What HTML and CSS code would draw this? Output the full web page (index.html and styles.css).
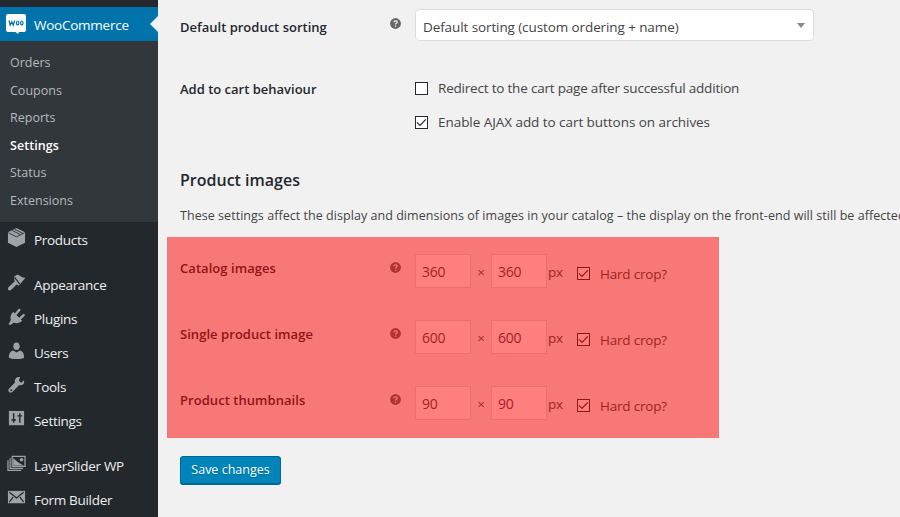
FILE: index.html
```html
<!DOCTYPE html>
<html lang="en">
<head>
<meta charset="utf-8">
<title>WooCommerce settings</title>
<link rel="stylesheet" href="styles.css">
</head>
<body>
<svg class="defs" width="0" height="0">
  <symbol id="help" viewBox="0 0 11 11"><circle cx="5.5" cy="5.5" r="5.4" fill="#666"/><path d="M3.9 4.3C3.9 2.3 7.2 2.3 7.2 4.2C7.2 5.3 5.6 5.3 5.6 6.6M5.6 7.5V8.8" fill="none" stroke="#f1f1f1" stroke-width="1.3"/></symbol>
  <symbol id="check" viewBox="0 0 11 11"><path d="M1 5.300L4 8.300L9.800 2.300" fill="none" stroke="#23282d" stroke-width="1.2"/></symbol>
</svg>
<div class="screen">
  <nav class="sidebar">
    <a class="item current"><svg class="icon" viewBox="0 0 20 20"><path d="M2 0h16a2 2 0 0 1 2 2v14a2 2 0 0 1-2 2h-5l-1 2-2.500-2H2a2 2 0 0 1-2-2V2a2 2 0 0 1 2-2z" fill="#fff"/><path d="M3 6.500l1.200 4.800 1.600-3.500 1.500 3.500 1.500-4.800" fill="none" stroke="#0073aa" stroke-width="1.200"/><ellipse cx="11.700" cy="8.900" rx="1.200" ry="1.900" fill="none" stroke="#0073aa" stroke-width="1.200"/><ellipse cx="15.800" cy="8.900" rx="1.200" ry="1.900" fill="none" stroke="#0073aa" stroke-width="1.200"/></svg><span>WooCommerce</span></a>
    <div class="submenu">
      <a>Orders</a><a>Coupons</a><a>Reports</a><a class="active">Settings</a><a>Status</a><a>Extensions</a>
    </div>
    <a class="item products"><svg class="icon" viewBox="0 0 20 20"><path d="M10 0l9 4.500v11L10 20l-9-4.500v-11z" fill="#9ea3a8"/><path d="M1.500 5L10 9.300L18.500 5M5.500 2.600l8.500 4.300M8 1.300l8.500 4.300" fill="none" stroke="#23282d" stroke-width=".9"/></svg><span>Products</span></a>
    <a class="item gap"><svg class="icon" viewBox="0 0 20 20"><path d="M7.500 3L10.500.8c2.500-.8 3.500 2.700 9 3.200L12.500 12l-2.500-1-5.500 5.500c-2 2-4.500 0-3-2.500L8 8z" fill="#9ea3a8"/><path d="M8 3.600l5.500 7" stroke="#23282d" stroke-width="1.200"/></svg><span>Appearance</span></a>
    <a class="item"><svg class="icon" viewBox="0 0 20 20"><path d="M6.500 4l9.500 9.500c-2.500 2.500-6 3-9 2L3.500 18l-2-1L4 13C3 10 4 6.500 6.500 4z" fill="#9ea3a8"/><path d="M9.500 6L13 2M14 11L17.500 7.500" stroke="#9ea3a8" stroke-width="2.500" stroke-linecap="round"/></svg><span>Plugins</span></a>
    <a class="item"><svg class="icon" viewBox="0 0 20 20"><ellipse cx="10" cy="4.500" rx="3.300" ry="4" fill="#9ea3a8"/><path d="M2 16.500c0-5 2-7 4.500-7.500l3.500 2 3.500-2c2.500.5 4.500 2.500 4.500 7.500-2 1.800-14 1.800-16 0z" fill="#9ea3a8"/></svg><span>Users</span></a>
    <a class="item"><svg class="icon" viewBox="0 0 20 20"><path d="M17.800 4.500L15 7l-2.500-2 1.200-3.800C10 .2 7.500 3.500 8.400 6.800L2 13.500c-2 2.500 1.500 5.500 4 3.200l6.500-7C16 10.500 19 8 17.800 4.500z" fill="#9ea3a8"/><circle cx="4.500" cy="15" r="1" fill="#23282d"/></svg><span>Tools</span></a>
    <a class="item"><svg class="icon" viewBox="0 0 20 20"><path d="M2 1h16v15H2z" fill="#9ea3a8"/><path d="M7 3.500v10M13.500 3.500v10M4.500 10.500h5M11 6.200h5" stroke="#23282d" stroke-width="1.500"/></svg><span>Settings</span></a>
    <a class="item gap"><svg class="icon" viewBox="0 0 20 20"><path d="M5.500 1.500h13.500v10.500H5.500zM3.300 3.500v10.700H17M1 5.500v10.800H15" fill="none" stroke="#9ea3a8" stroke-width="1.300"/><path d="M6.500 3.500l5.500 4.500 5.500 3H6.500z" fill="#9ea3a8"/><circle cx="15.300" cy="5" r="1.900" fill="#9ea3a8"/></svg><span>LayerSlider WP</span></a>
    <a class="item"><svg class="icon" viewBox="0 0 20 20"><path d="M1 2h18v13H1z" fill="#9ea3a8"/><path d="M2.500 3.500l7.500 6 7.500-6M2.500 13.500l4-5M17.500 13.500l-4-5" fill="none" stroke="#23282d" stroke-width="1.300"/></svg><span>Form Builder</span></a>
  </nav>
  <main class="content">
    <div class="row sorting">
      <strong>Default product sorting</strong><svg class="help"><use href="#help"/></svg>
      <div class="select"><span>Default sorting (custom ordering + name)</span><i class="caret"></i></div>
    </div>
    <div class="row cart">
      <strong>Add to cart behaviour</strong><span></span>
      <div class="checks">
        <label><svg class="box"></svg><span class="redirect">Redirect to the cart page after successful addition</span></label>
        <label><svg class="box"><use href="#check"/></svg><span class="ajax">Enable AJAX add to cart buttons on archives</span></label>
      </div>
    </div>
    <h2>Product images</h2>
    <p>These settings affect the display and dimensions of images in your catalog – the display on the front-end will still be affected</p>
    <section class="images">
      <div class="row"><strong>Catalog images</strong><svg class="help"><use href="#help"/></svg><div class="size"><b>360</b><i>×</i><b>360</b><em>px</em><svg class="box"><use href="#check"/></svg><span>Hard crop?</span></div></div>
      <div class="row"><strong>Single product image</strong><svg class="help"><use href="#help"/></svg><div class="size"><b>600</b><i>×</i><b>600</b><em>px</em><svg class="box"><use href="#check"/></svg><span>Hard crop?</span></div></div>
      <div class="row"><strong>Product thumbnails</strong><svg class="help"><use href="#help"/></svg><div class="size"><b>90</b><i>×</i><b>90</b><em>px</em><svg class="box"><use href="#check"/></svg><span>Hard crop?</span></div></div>
    </section>
    <button type="button">Save changes</button>
  </main>
</div>
</body>
</html>
```
FILE: styles.css
```css
* { box-sizing: border-box; }
body { margin: 0; background: #f1f1f1; color: #444; font: 13.5px/18px "Open Sans", "Noto Sans", sans-serif; }
.defs { position: absolute; }
.screen { display: flex; width: 900px; height: 517px; overflow: hidden; }
.sidebar { width: 158px; flex: none; padding-top: 7px; background: #23282d; color: #eee; }
.item { display: flex; align-items: center; height: 34px; padding: 0 0 0 7px; gap: 8px; position: relative; white-space: nowrap; letter-spacing: -.3px; }
.icon { width: 19px; height: 19px; flex: none; margin-top: -4px; }
.current { background: #0073aa; color: #fff; padding: 2px 0 0 6px; letter-spacing: -.25px; }
.current .icon { width: 20px; height: 20px; margin-top: -3px; }
.current::after { content: ""; position: absolute; right: 0; top: 9px; border: 8px solid transparent; border-right-color: #f1f1f1; border-left: 0; }
.submenu { height: 181px; padding: 8px 10px; background: #32373c; color: #b4b9be; font-size: 12.5px; }
.submenu a { display: block; height: 27.6px; line-height: 28px; }
.submenu .active { color: #fff; font-weight: 600; letter-spacing: .05px; }
.gap { margin-top: 11px; }
.products { height: 35px; }
.content { width: 742px; flex: none; padding: 9px 0 0 22px; }
.row { display: grid; grid-template-columns: 210px 25px 1fr; align-items: start; white-space: nowrap; }
strong { font-weight: 600; color: #23282d; font-size: 13px; }
.help { width: 11px; height: 11px; }
.sorting { height: 70px; }
.sorting strong { padding-top: 9px; }
.sorting .help { margin-top: 9px; }
.select { width: 399px; height: 32px; border: 1px solid #ddd; border-radius: 4px; background: #fff; display: flex; align-items: center; justify-content: space-between; padding: 4px 8px 0 7px; letter-spacing: -.1px; }
.caret { border: 4px solid transparent; border-top: 5px solid #888; border-bottom: 0; margin-top: -3px; }
.cart { height: 89px; }
.cart strong { padding-top: 1px; }
.checks label { display: flex; align-items: center; gap: 10px; height: 18px; margin-bottom: 16px; }
.redirect { letter-spacing: -.2px; }
.ajax { letter-spacing: -.05px; }
.box { width: 13px; height: 13px; border: 1px solid #23282d; background: #fff; flex: none; }
h2 { margin: 0; height: 39px; color: #23282d; font-size: 16px; font-weight: 600; line-height: 24px; }
p { margin: 0; height: 30px; font-size: 12.5px; letter-spacing: .045px; white-space: nowrap; }
.images { position: relative; height: 201px; margin-left: -13px; padding: 17px 0 0 13px; width: 552px; }
.images::after { content: ""; position: absolute; inset: 0; background: rgba(255, 0, 0, .5); }
.images .row { height: 66px; }
.images strong { padding-top: 5px; letter-spacing: .05px; }
.images .help { margin-top: 8px; }
.size { display: flex; align-items: center; height: 34px; letter-spacing: -.2px; }
.size b { width: 56px; height: 34px; border: 1px solid #ddd; background: #fff; font-weight: 400; font-size: 14px; line-height: 34px; padding-left: 6px; }
.size i { width: 20px; text-align: center; font-style: normal; padding-top: 2px; }
.size em { width: 30px; font-style: normal; padding: 2px 0 0 1px; }
.size .box { margin-top: 4px; }
.size span { margin: 5px 0 0 10px; }
button { display: block; width: 101px; height: 28px; margin-top: 18px; padding: 0; border: 1px solid #006799; border-radius: 3px; background: #0085ba; color: #fff; font: 12.5px/26px "Open Sans", sans-serif; box-shadow: 0 1px 0 #006799; text-shadow: 0 1px 1px #006799; }
```
